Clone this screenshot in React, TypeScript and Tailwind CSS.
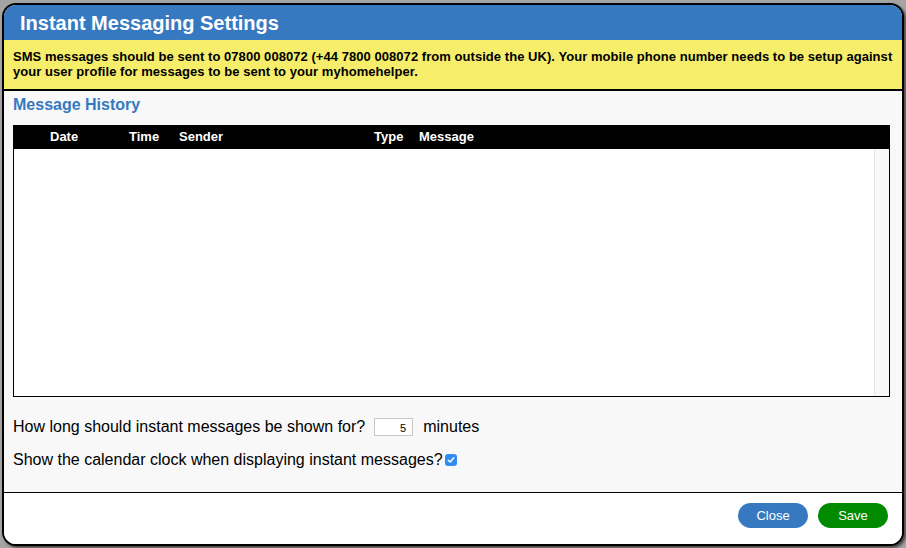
import React, { useState } from "react";

const columns = [
  { label: "Date", w: "w-[79px]" },
  { label: "Time", w: "w-[50px]" },
  { label: "Sender", w: "w-[195px]" },
  { label: "Type", w: "w-[45px]" },
  { label: "Message", w: "flex-1" },
];

export default function App() {
  const [minutes, setMinutes] = useState("5");
  const [showClock, setShowClock] = useState(true);

  return (
    <div
      className="w-[906px] h-[548px] bg-[#a4a4a4] pl-[2px] pt-[3px]"
      style={{ fontFamily: '"Liberation Sans", Arial, sans-serif' }}
    >
      <div className="w-[902px] h-[543px] border-2 border-black rounded-[14px] overflow-hidden flex flex-col bg-white shadow-[2px_2px_3px_rgba(0,0,0,0.6)]">
        {/* title */}
        <div className="h-[35px] bg-[#3779c0] flex items-center pl-[16px] pt-[1px]">
          <h1 className="text-white font-bold text-[20px] leading-none">Instant Messaging Settings</h1>
        </div>

        {/* notice */}
        <div className="bg-[#f6ee6a] border-b-2 border-black px-[9px] pt-[9px] pb-[10px]">
          <p className="text-black font-bold text-[13px] leading-[15px] tracking-[0.05px]">
            SMS messages should be sent to 07800 008072 (+44 7800 008072 from outside the UK). Your mobile phone number needs to be setup against your user profile for messages to be sent to your myhomehelper.
          </p>
        </div>

        {/* body */}
        <div className="h-[401px] bg-[#f8f8f8] px-[9px] flex flex-col">
          <h2 className="text-[#3779c0] font-bold text-[16px] leading-[18px] mt-[5px] mb-[11px]">Message History</h2>

          <div className="w-[877px] h-[272px] border border-black bg-white flex flex-col">
            <div className="h-[23px] bg-black flex items-center pl-[36px] pb-[1px] text-white font-bold text-[13px]">
              {columns.map((c) => (
                <div key={c.label} className={c.w}>
                  {c.label}
                </div>
              ))}
            </div>
            <div className="flex-1 flex">
              <div className="flex-1" />
              <div className="w-[15px] bg-[#f8f8f8] border-l border-[#e6e6e6]" />
            </div>
          </div>

          <div className="flex items-center mt-[21px] text-[16px] text-black h-[18px]">
            <span>How long should instant messages be shown for?</span>
            <input
              value={minutes}
              onChange={(e) => setMinutes(e.target.value)}
              className="ml-[9px] w-[39px] h-[18px] border border-[#c8c8c8] bg-white text-right text-[11px] pr-[6px] pt-[2px] outline-none"
            />
            <span className="ml-[10px]">minutes</span>
          </div>

          <div className="flex items-center mt-[15px] text-[16px] text-black h-[18px]">
            <span>Show the calendar clock when displaying instant messages?</span>
            <button
              onClick={() => setShowClock(!showClock)}
              className={
                showClock
                  ? "ml-[2px] w-[12px] h-[12px] rounded-[3px] bg-[#2f8cf2] flex items-center justify-center"
                  : "ml-[2px] w-[12px] h-[12px] rounded-[3px] bg-white border border-[#999] flex items-center justify-center"
              }
            >
              {showClock && (
                <svg width="8" height="8" viewBox="0 0 8 8">
                  <path d="M1.3 4.2 L3.2 6 L6.8 1.8" stroke="white" strokeWidth="1.5" fill="none" strokeLinecap="round" strokeLinejoin="round" />
                </svg>
              )}
            </button>
          </div>
        </div>

        {/* footer */}
        <div className="flex-1 border-t border-black bg-white flex justify-end items-start pt-[10px] pr-[14px] gap-[10px]">
          <button className="w-[70px] h-[25px] rounded-full bg-[#3779c0] text-white text-[13px] pt-[1px]">Close</button>
          <button className="w-[70px] h-[25px] rounded-full bg-[#008a00] text-white text-[13px] pt-[1px]">Save</button>
        </div>
      </div>
    </div>
  );
}
